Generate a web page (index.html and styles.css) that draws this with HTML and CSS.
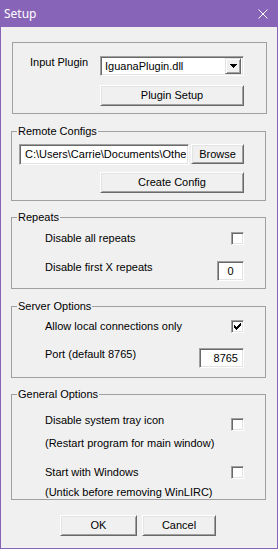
FILE: index.html
```html
<!DOCTYPE html>
<html>
<head>
<meta charset="utf-8">
<title>Setup</title>
<link rel="stylesheet" href="styles.css">
</head>
<body>
<div class="window">
  <div class="titlebar">
    <span class="title">Setup</span>
    <svg class="close" width="10" height="10" viewBox="0 0 10 10"><path d="M0.5 0.5L9.5 9.5M9.5 0.5L0.5 9.5" stroke="#fff" stroke-width="1" fill="none"/></svg>
  </div>
  <div class="client">
    <div class="group g1">
      <div class="row">
        <span class="label">Input Plugin</span>
        <div class="combo">
          <span class="combo-text">IguanaPlugin.dll</span>
          <span class="combo-btn"><svg width="7" height="4" viewBox="0 0 7 4"><path d="M0 0h7v1h-1v1h-1v1h-1v1h-1v-1h-1v-1h-1v-1h-1z" fill="#000"/></svg></span>
        </div>
      </div>
      <button class="btn wide b-plugin">Plugin Setup</button>
    </div>

    <fieldset class="group g2">
      <legend>Remote Configs</legend>
      <div class="gbody">
        <div class="row path-row">
          <div class="edit path"><span class="path-text">C:\Users\Carrie\Documents\Other</span></div>
          <button class="btn browse">Browse</button>
        </div>
        <button class="btn wide b-create">Create Config</button>
      </div>
    </fieldset>

    <fieldset class="group g3">
      <legend>Repeats</legend>
      <div class="gbody">
        <div class="row opt r1">
          <span class="label">Disable all repeats</span>
          <span class="check"></span>
        </div>
        <div class="row opt r2">
          <span class="label">Disable first X repeats</span>
          <div class="edit num center small">0</div>
        </div>
      </div>
    </fieldset>

    <fieldset class="group g4">
      <legend>Server Options</legend>
      <div class="gbody">
        <div class="row opt r1">
          <span class="label">Allow local connections only</span>
          <span class="check"><svg width="7" height="7" viewBox="0 0 7 7"><path d="M0 2h1v3h-1zM1 3h1v3h-1zM2 4h1v3h-1zM3 3h1v3h-1zM4 2h1v3h-1zM5 1h1v3h-1zM6 0h1v3h-1z" fill="#000"/></svg></span>
        </div>
        <div class="row opt r2">
          <span class="label">Port (default 8765)</span>
          <div class="edit num port">8765</div>
        </div>
      </div>
    </fieldset>

    <fieldset class="group g5">
      <legend>General Options</legend>
      <div class="gbody">
        <div class="row opt tray">
          <div class="lines">
            <span class="label">Disable system tray icon</span>
            <span class="label note">(Restart program for main window)</span>
          </div>
          <span class="check"></span>
        </div>
        <div class="row opt start">
          <div class="lines">
            <span class="label">Start with Windows</span>
            <span class="label note">(Untick before removing WinLIRC)</span>
          </div>
          <span class="check"></span>
        </div>
      </div>
    </fieldset>

    <div class="actions">
      <button class="btn ok">OK</button>
      <button class="btn cancel">Cancel</button>
    </div>
  </div>
</div>
</body>
</html>
```

FILE: styles.css
```css
* { box-sizing: border-box; }
html, body { margin: 0; padding: 0; }
body {
  width: 278px;
  height: 549px;
  background: #f0f0f0;
  font-family: "Liberation Sans", Arial, sans-serif;
  font-size: 11px;
  line-height: 13px;
  color: #000;
  overflow: hidden;
}
.window {
  width: 278px;
  height: 549px;
  background: #f0f0f0;
  border: 1px solid #8864b8;
  border-top: none;
  display: flex;
  flex-direction: column;
}
.titlebar {
  height: 27px;
  flex: none;
  background: #8864b8;
  display: flex;
  align-items: center;
  justify-content: space-between;
  padding: 0 9px 0 3px;
  color: #fff;
}
.title {
  font-family: "Noto Sans", "Open Sans", sans-serif;
  font-size: 12px;
  line-height: 16px;
}
.close { display: block; }

.client {
  display: flex;
  flex-direction: column;
  padding-top: 15px;
}

.group {
  margin: 0;
  min-width: 0;
  width: 255px;
  border: 1px solid #a0a0a0;
  display: flex;
  flex-direction: column;
}
fieldset.group { padding-left: 0; padding-right: 0; }
legend {
  padding: 0 1px;
  margin-left: 5px;
  line-height: 13px;
}
.gbody { display: flex; flex-direction: column; }
.row { display: flex; align-items: flex-start; }
.label { white-space: nowrap; }

.g1 { margin-left: 11px; padding: 13px 22px 7px 17px; }
.g1 .row { justify-content: space-between; height: 20px; }

.g2, .g3, .g4, .g5 { margin-left: 10px; }
.g2 { margin-top: 11px; padding-top: 6px; padding-bottom: 7px; }
.g2 .gbody { padding: 0 21px 0 7px; }
.g3 { margin-top: 10px; padding-top: 8px; padding-bottom: 7px; }
.g4 { margin-top: 11px; padding-top: 7px; padding-bottom: 9px; }
.g5 { margin-top: 10px; padding-top: 13px; padding-bottom: 0; }
.g3 .gbody, .g4 .gbody, .g5 .gbody { padding: 0 21px 0 33px; }

.opt { justify-content: space-between; }
.g3 .r2 { margin-top: 16px; }
.g4 .r2 { margin-top: 15px; }

.lines { display: flex; flex-direction: column; }
.tray .note { margin-top: 10px; }
.tray .check { margin-top: 4px; }
.start { margin-top: 16px; }
.start .note { margin-top: 7px; }

/* controls */
.btn {
  font: inherit;
  color: #000;
  background: #f0f0f0;
  border: 1px solid;
  border-color: #fff #696969 #696969 #fff;
  box-shadow: inset 1px 1px #e3e3e3, inset -1px -1px #a0a0a0;
  padding: 0;
  margin: 0;
  height: 21px;
  display: flex;
  align-items: center;
  justify-content: center;
}
.wide { width: 144px; align-self: flex-end; }
.b-plugin { margin-top: 9px; }
.b-create { margin-top: 7px; }
.browse { width: 53px; margin-left: 2px; height: 20px; }

.edit, .combo, .check {
  background: #fff;
  border: 1px solid;
  border-color: #a0a0a0 #fff #fff #a0a0a0;
  box-shadow: inset 1px 1px #696969, inset -1px -1px #e3e3e3;
}
.edit {
  height: 20px;
  display: flex;
  align-items: center;
  white-space: nowrap;
  overflow: hidden;
}
.path { width: 170px; padding-left: 5px; padding-right: 2px; height: 21px; }
.path-text { flex: 1; min-width: 0; overflow: hidden; white-space: nowrap; }
.num { justify-content: flex-end; padding-right: 5px; }
.center { justify-content: center; padding-right: 0; }
.small { width: 27px; }
.port { width: 45px; }

.combo {
  width: 144px;
  height: 20px;
  display: flex;
  align-items: center;
  padding: 2px;
}
.combo-text { flex: 1; padding-left: 2px; white-space: nowrap; }
.combo-btn {
  width: 16px;
  height: 16px;
  background: #f0f0f0;
  border: 1px solid;
  border-color: #e3e3e3 #696969 #696969 #e3e3e3;
  box-shadow: inset 1px 1px #fff, inset -1px -1px #a0a0a0;
  display: flex;
  align-items: center;
  justify-content: center;
}
.combo-btn svg { display: block; }

.check {
  width: 13px;
  height: 13px;
  flex: none;
  display: flex;
  align-items: center;
  justify-content: center;
}
.check svg { display: block; }

.actions {
  display: flex;
  justify-content: center;
  gap: 5px;
  margin-top: 15px;
  padding-right: 2px;
}
.ok { width: 77px; }
.cancel { width: 74px; }
```
